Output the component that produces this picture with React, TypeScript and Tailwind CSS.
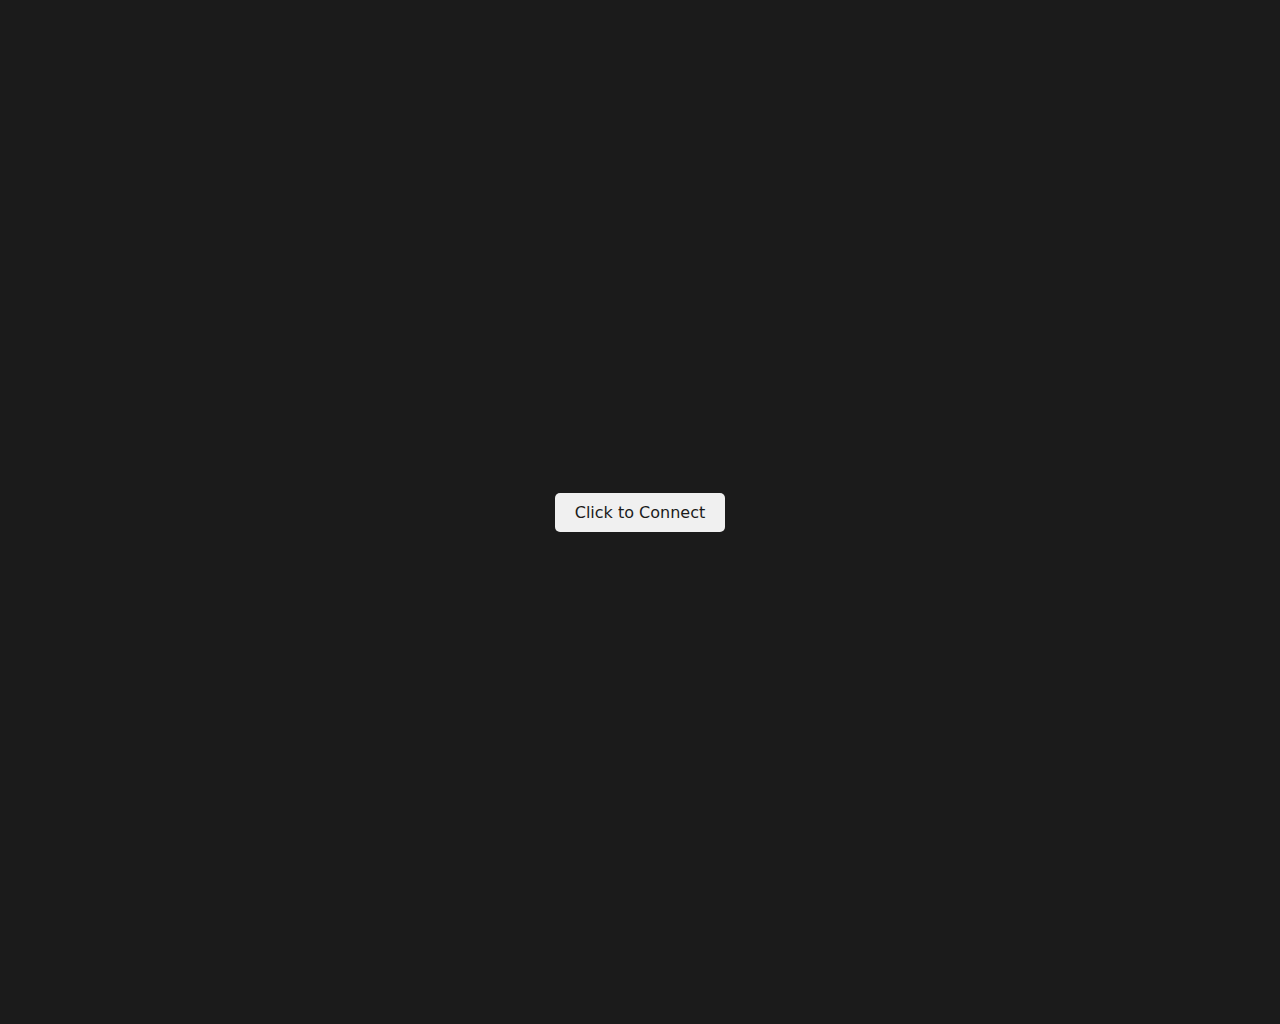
export default function App() {
  return (
    <div className="h-screen w-full bg-[#1b1b1b] flex items-center justify-center" style={{ fontFamily: '"DejaVu Sans", sans-serif' }}>
      <button
        type="button"
        className="px-5 py-[10px] rounded-[5px] bg-[#f0f0f0] text-[#1b1b1b] text-base leading-[19px]"
      >
        Click to Connect
      </button>
    </div>
  )
}
